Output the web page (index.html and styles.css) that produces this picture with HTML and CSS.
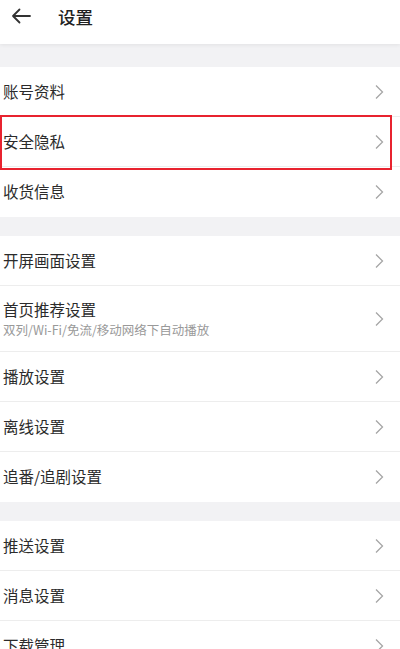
FILE: index.html
```html
<!DOCTYPE html>
<html lang="zh">
<head>
<meta charset="utf-8">
<link rel="stylesheet" href="styles.css">
</head>
<body>
<header class="topbar">
  <svg class="back" width="20" height="16" viewBox="0 0 20 16"><path d="M19 8H2M8.5 1.5L2 8l6.5 6.5" fill="none" stroke="#333" stroke-width="1.8" stroke-linecap="round" stroke-linejoin="round"/></svg>
  <span class="title">设置</span>
</header>
<div class="gap first"></div>
<section class="group">
  <div class="row"><span class="label">账号资料</span><svg class="chev" viewBox="0 0 10 16"><path d="M2 1.5L8.5 8 2 14.5" fill="none" stroke="#a6a6a6" stroke-width="1.3"/></svg></div>
  <div class="row hl"><span class="label">安全隐私</span><svg class="chev" viewBox="0 0 10 16"><path d="M2 1.5L8.5 8 2 14.5" fill="none" stroke="#a6a6a6" stroke-width="1.3"/></svg></div>
  <div class="row"><span class="label">收货信息</span><svg class="chev" viewBox="0 0 10 16"><path d="M2 1.5L8.5 8 2 14.5" fill="none" stroke="#a6a6a6" stroke-width="1.3"/></svg></div>
</section>
<div class="gap"></div>
<section class="group">
  <div class="row"><span class="label">开屏画面设置</span><svg class="chev" viewBox="0 0 10 16"><path d="M2 1.5L8.5 8 2 14.5" fill="none" stroke="#a6a6a6" stroke-width="1.3"/></svg></div>
  <div class="row tall"><div class="texts"><span class="label">首页推荐设置</span><span class="sub">双列/Wi-Fi/免流/移动网络下自动播放</span></div><svg class="chev" viewBox="0 0 10 16"><path d="M2 1.5L8.5 8 2 14.5" fill="none" stroke="#a6a6a6" stroke-width="1.3"/></svg></div>
  <div class="row"><span class="label">播放设置</span><svg class="chev" viewBox="0 0 10 16"><path d="M2 1.5L8.5 8 2 14.5" fill="none" stroke="#a6a6a6" stroke-width="1.3"/></svg></div>
  <div class="row"><span class="label">离线设置</span><svg class="chev" viewBox="0 0 10 16"><path d="M2 1.5L8.5 8 2 14.5" fill="none" stroke="#a6a6a6" stroke-width="1.3"/></svg></div>
  <div class="row"><span class="label">追番/追剧设置</span><svg class="chev" viewBox="0 0 10 16"><path d="M2 1.5L8.5 8 2 14.5" fill="none" stroke="#a6a6a6" stroke-width="1.3"/></svg></div>
</section>
<div class="gap"></div>
<section class="group">
  <div class="row"><span class="label">推送设置</span><svg class="chev" viewBox="0 0 10 16"><path d="M2 1.5L8.5 8 2 14.5" fill="none" stroke="#a6a6a6" stroke-width="1.3"/></svg></div>
  <div class="row"><span class="label">消息设置</span><svg class="chev" viewBox="0 0 10 16"><path d="M2 1.5L8.5 8 2 14.5" fill="none" stroke="#a6a6a6" stroke-width="1.3"/></svg></div>
  <div class="row"><span class="label">下载管理</span><svg class="chev" viewBox="0 0 10 16"><path d="M2 1.5L8.5 8 2 14.5" fill="none" stroke="#a6a6a6" stroke-width="1.3"/></svg></div>
</section>
</body>
</html>
```
FILE: styles.css
```css
* { box-sizing: border-box; }
html, body { margin: 0; padding: 0; }
body {
  width: 400px;
  height: 649px;
  overflow: hidden;
  background: #f2f2f4;
  font-family: "Noto Sans CJK SC", "Noto Sans", sans-serif;
  color: #333;
}
.topbar {
  height: 44px;
  background: #fff;
  display: flex;
  align-items: center;
  padding-left: 11px;
  padding-bottom: 12px;
  box-shadow: 0 1px 4px rgba(0,0,0,0.07);
  position: relative;
  z-index: 1;
}
.back { width: 20px; height: 16px; }
.title {
  margin-left: 27px;
  font-size: 17.5px;
  font-weight: 500;
  color: #222;
}
.gap { height: 19px; background: #f2f2f4; }
.gap.first { height: 23px; }
.group { background: #fff; }
.row {
  height: 50px;
  display: flex;
  align-items: center;
  justify-content: space-between;
  padding: 0 16px 0 3px;
  border-bottom: 1px solid #ededed;
  position: relative;
}
.row:last-child { border-bottom: none; }
.row.tall { height: 66px; }
.label { font-size: 15.5px; color: #2b2b2b; line-height: 1; }
.texts { display: flex; flex-direction: column; gap: 7px; padding-top: 1px; }
.sub { font-size: 12.5px; color: #999; line-height: 1; }
.chev { width: 10px; height: 16px; }
.hl::after {
  content: "";
  position: absolute;
  left: 0;
  right: 8px;
  top: -2px;
  bottom: -4px;
  border: 2px solid #e8232f;
}
```
